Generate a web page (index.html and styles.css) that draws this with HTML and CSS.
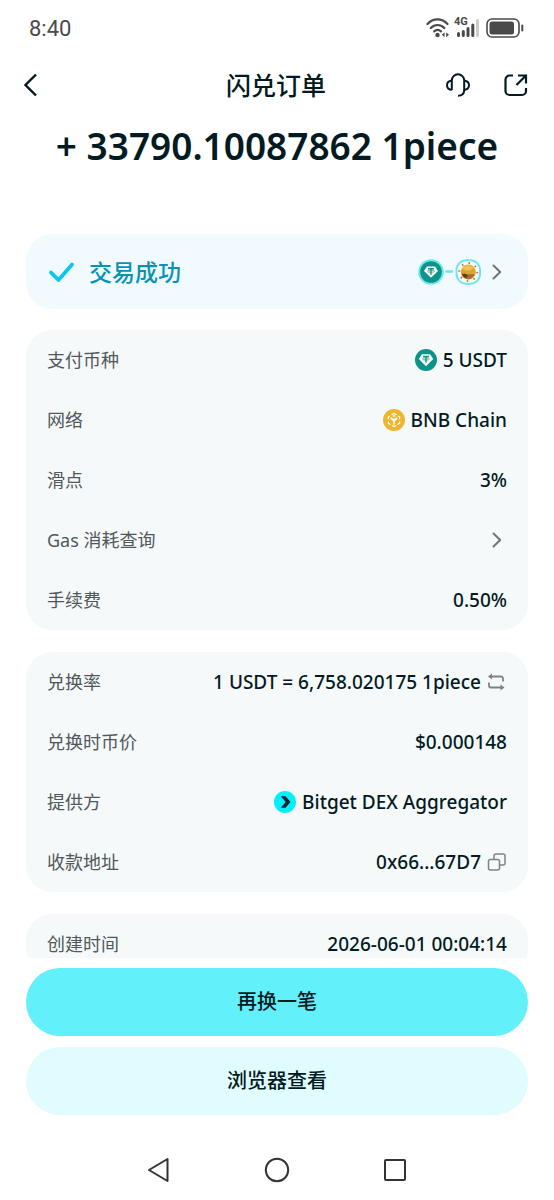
FILE: index.html
```html
<!DOCTYPE html>
<html lang="zh-CN">
<head>
<meta charset="utf-8">
<meta name="viewport" content="width=device-width, initial-scale=1">
<title>闪兑订单</title>
<link rel="stylesheet" href="styles.css">
</head>
<body>
<svg class="defs" aria-hidden="true">
  <symbol id="usdt" viewBox="0 0 22 22">
    <circle cx="11" cy="11" r="11" fill="#0c9488"/>
    <path d="M7 5.2h8l3.2 4.9L11 17.200 3.800 10.100z" fill="#fff"/>
    <path d="M8 7.500h6M11 7.500v6.200" stroke="#0c9488" stroke-width="1.400" fill="none"/>
    <ellipse cx="11" cy="10" rx="3.500" ry="1" fill="none" stroke="#0c9488" stroke-width=".7"/>
  </symbol>
  <symbol id="chevron" viewBox="0 0 10 18">
    <path d="M1.500 2.500 8.200 9l-6.700 6.500" fill="none" stroke="currentColor" stroke-width="2" stroke-linecap="round" stroke-linejoin="round"/>
  </symbol>
</svg>
<div class="screen">
  <div class="status-bar">
    <span class="clock">8:40</span>
    <div class="indicators">
      <svg width="24" height="20" viewBox="0 0 24 20" fill="none" stroke="#4a4a4a" stroke-width="2.200" stroke-linecap="round">
        <path d="M1.500 6C7-.2 16-.2 21.500 6M4.800 10c4-4 9.500-4 13.500 0M8.200 13.400c2-1.900 4.800-1.900 6.800 0"/>
        <circle cx="11.500" cy="17" r="2.200" fill="#4a4a4a" stroke="none"/>
        <path d="M18.600 14.200v5l-2.800-2.500zM20.200 14.200v5l2.800-2.500z" fill="#4a4a4a" stroke="none"/>
      </svg>
      <div class="signal">
        <span class="network-type">4G</span>
        <svg width="24" height="20" viewBox="0 0 24 20" fill="none" stroke="#4a4a4a" stroke-width="3" stroke-linecap="round">
          <path d="M2.500 15.500v2M7.300 13.500v4M12 10.500v7M16.800 7v10.500"/>
          <path d="M21.500 2.500v15" stroke="#ccc"/>
        </svg>
      </div>
      <svg width="38" height="20" viewBox="0 0 38 20">
        <rect x="1" y="1" width="32" height="18" rx="5" fill="none" stroke="#4a4a4a" stroke-width="1.600"/>
        <rect x="3.500" y="3.500" width="24.500" height="13" rx="2.500" fill="#4a4a4a"/>
        <path d="M36.300 7.500v5" stroke="#4a4a4a" stroke-width="2" stroke-linecap="round"/>
      </svg>
    </div>
  </div>

  <header class="header">
    <button class="icon-button" aria-label="返回">
      <svg width="16" height="24" viewBox="0 0 16 24" fill="none" stroke="#021b23" stroke-width="2.400"><path d="M12 1.500 1.500 12 12 22.500"/></svg>
    </button>
    <h1 class="title">闪兑订单</h1>
    <div class="header-actions">
      <button class="icon-button" aria-label="客服">
        <svg width="24" height="24" viewBox="0 0 24 24" fill="none" stroke="#021b23" stroke-width="2" stroke-linejoin="round">
          <path d="M5.800 17V7.500a6.200 6.200 0 0 1 12.400 0V17c0 3.500-2.200 5.800-6.200 5.800"/>
          <path d="M5.800 7.500C2.500 8 1 10 1 12.200s1.500 4.300 4.800 4.800M18.200 7.500c3.300.5 4.800 2.500 4.800 4.700s-1.500 4.300-4.800 4.800"/>
        </svg>
      </button>
      <button class="icon-button" aria-label="分享">
        <svg width="24" height="24" viewBox="0 0 24 24" fill="none" stroke="#021b23" stroke-width="2.200">
          <path d="M9 2.500H5.500a4 4 0 0 0-4 4v11.500a4 4 0 0 0 4 4H18a4 4 0 0 0 4-4V15"/>
          <path d="M14 2.500h8v8M22 2.500l-9.500 9.500"/>
        </svg>
      </button>
    </div>
  </header>

  <main class="content">
    <p class="amount">+ 33790.10087862 1piece</p>

    <a class="card result" href="#progress">
      <svg width="28" height="22" viewBox="0 0 28 22" fill="none" stroke="#0bc5ea" stroke-width="3.800" stroke-linecap="round" stroke-linejoin="round"><path d="m3 11.500 7.500 7.500L24 3.500"/></svg>
      <span class="result-text">交易成功</span>
      <span class="route">
        <svg width="63" height="26" viewBox="0 0 63 26">
          <circle cx="13" cy="13" r="11.800" fill="#0c9488" stroke="#6ae8ee" stroke-width="2"/>
          <path d="M9 7.500h8l3 4.600-7 6.700-7-6.700z" fill="#fff"/>
          <path d="M10 9.800h6M13 9.800v6" stroke="#0c9488" stroke-width="1.400"/>
          <ellipse cx="13" cy="12.200" rx="3.500" ry="1" fill="none" stroke="#0c9488" stroke-width=".7"/>
          <path d="M28.500 12.500h5.500" stroke="#6ae8ee" stroke-width="2.600" stroke-linecap="round"/>
          <rect x="38.500" y="1.200" width="23.600" height="23.600" rx="10" fill="#fffdf9" stroke="#6ae8ee" stroke-width="2"/>
          <circle cx="50.300" cy="13" r="9" fill="none" stroke="#b87432" stroke-width="2" stroke-dasharray="1.500 5.570"/>
          <circle cx="50.300" cy="13" r="7.500" fill="#d9a336"/>
          <path d="M44 10c3-5 9-4.500 12-1-3 1-4 3.500-7 2.500z" fill="#efc353"/>
          <path d="M43.500 14.500c2-.5 3 1.500 6 1 2-1 3 .5 7-.5-2 6.500-10 7.500-13-.5z" fill="#a86c22"/>
          <path d="m44 15.500 3-1 3 2-2 2.500c-2-.5-3.500-2-4-3.500z" fill="#5d3c18"/>
        </svg>
        <svg class="arrow" width="10" height="18"><use href="#chevron"/></svg>
      </span>
    </a>

    <dl class="card">
      <div class="row"><dt>支付币种</dt><dd><svg width="22" height="22"><use href="#usdt"/></svg>5 USDT</dd></div>
      <div class="row"><dt>网络</dt><dd>
        <svg width="22" height="22" viewBox="0 0 22 22">
          <circle cx="11" cy="11" r="11" fill="#efb62d"/>
          <path d="m8.500 5.800 2.500-1.400 2.500 1.400M15.300 7l1.300.8v2.400M16.600 12.500v1.800l-2 1.200M13 16.400l-2 1.200-2-1.200M7.400 15.500l-2-1.200v-1.800M5.400 10.200V7.800L6.700 7" fill="none" stroke="#fff" stroke-width="1.200"/>
          <path d="m7.600 8 3.400 2 3.400-2v2.300L11 12.500l-3.400-2.200zM10.200 12h1.600v3.600h-1.600z" fill="#fff"/>
          <path d="m9.300 7 1.700-1 1.700 1-1.700 1z" fill="#fff"/>
        </svg>BNB Chain</dd></div>
      <div class="row"><dt>滑点</dt><dd>3%</dd></div>
      <div class="row"><dt>Gas 消耗查询</dt><dd><a href="#gas" aria-label="Gas 消耗查询"><svg class="arrow" width="10" height="18"><use href="#chevron"/></svg></a></dd></div>
      <div class="row"><dt>手续费</dt><dd>0.50%</dd></div>
    </dl>

    <dl class="card">
      <div class="row"><dt>兑换率</dt><dd>1 USDT = 6,758.020175 1piece
        <button class="icon-button" aria-label="切换兑换率">
          <svg width="20" height="18" viewBox="0 0 20 18" fill="none" stroke="#7d8385" stroke-width="1.800">
            <path d="M16 8.500V5.500a2 2 0 0 0-2-2H3M2 9.500v3a2 2 0 0 0 2 2h11"/>
            <path d="M5 .5v6l-4-3zM13.500 11.500v6l4-3z" fill="#7d8385" stroke="none"/>
          </svg>
        </button></dd></div>
      <div class="row"><dt>兑换时币价</dt><dd>$0.000148</dd></div>
      <div class="row"><dt>提供方</dt><dd>
        <svg width="22" height="22" viewBox="0 0 22 22"><circle cx="11" cy="11" r="11" fill="#00f0ff"/><path d="M6.800 5.200h4.700l5 5.800-5 5.800H6.800l4.500-5.300c.3-.3.3-.7 0-1z" fill="#06222c"/></svg>Bitget DEX Aggregator</dd></div>
      <div class="row"><dt>收款地址</dt><dd>0x66...67D7
        <button class="icon-button" aria-label="复制地址">
          <svg width="20" height="18" viewBox="0 0 20 18" fill="none" stroke="#7d8385" stroke-width="1.500"><rect x="1.500" y="6.500" width="11" height="10.500" rx="2"/><path d="M7 6V3a2 2 0 0 1 2-2h7a2 2 0 0 1 2 2v7a2 2 0 0 1-2 2H13"/></svg>
        </button></dd></div>
    </dl>

    <dl class="card">
      <div class="row"><dt>创建时间</dt><dd>2026-06-01 00:04:14</dd></div>
    </dl>
  </main>

  <footer class="actions">
    <button class="button primary">再换一笔</button>
    <button class="button secondary">浏览器查看</button>
  </footer>

  <nav class="system-nav" aria-label="系统导航">
    <button class="icon-button" aria-label="后退"><svg width="26" height="26" viewBox="0 0 26 26"><path d="M3 13 21.500 2v22z"/></svg></button>
    <button class="icon-button" aria-label="主屏幕"><svg width="26" height="26" viewBox="0 0 26 26"><circle cx="13" cy="13" r="11.200"/></svg></button>
    <button class="icon-button" aria-label="最近任务"><svg width="26" height="26" viewBox="0 0 26 26"><rect x="3" y="3" width="20" height="20" rx="1"/></svg></button>
  </nav>
</div>
</body>
</html>
```
FILE: styles.css
```css
* { box-sizing: border-box; }

body {
  margin: 0;
  background: #fff;
  color: #021b23;
  font-family: "Noto Sans", "Noto Sans CJK SC", sans-serif;
  font-size: 18px;
}

svg { display: block; flex: none; }
.defs { position: absolute; width: 0; height: 0; }
a { color: inherit; text-decoration: none; }
button { font: inherit; color: inherit; border: 0; cursor: pointer; }
.icon-button { padding: 0; background: none; display: flex; }

.screen {
  height: 100vh;
  display: flex;
  flex-direction: column;
}

.status-bar {
  flex: none;
  height: 56px;
  padding: 0 30px 0 29px;
  display: flex;
  align-items: center;
  justify-content: space-between;
}
.clock { font-family: Roboto, sans-serif; font-size: 22px; color: #4a4a4a; }
.indicators { display: flex; align-items: center; gap: 6px; }
.signal { position: relative; }
.network-type {
  position: absolute;
  left: -2px;
  top: -2px;
  font: 700 11px/12px Roboto, sans-serif;
  color: #4a4a4a;
}

.header {
  flex: none;
  height: 60px;
  padding: 0 26px 2px 24px;
  display: grid;
  grid-template-columns: 1fr auto 1fr;
  align-items: center;
}
.title { margin: 0; font-size: 25px; font-weight: 500; line-height: 36px; }
.header-actions { display: flex; justify-content: flex-end; gap: 34px; }

.content {
  flex: 1;
  min-height: 0;
  overflow: hidden;
  padding: 2px 26px 0;
}
.amount {
  margin: 0 0 60px;
  font-size: 37px;
  font-weight: 600;
  line-height: 56px;
  text-align: center;
  white-space: nowrap;
}

.card {
  margin: 0 0 22px;
  border-radius: 26px;
  background: #f5f9fa;
}
.result {
  height: 75px;
  margin-bottom: 21px;
  padding: 0 26px 0 22px;
  display: flex;
  align-items: center;
  gap: 13px;
  background: #f1fbff;
}
.result-text { padding-bottom: 2px; font-size: 23px; font-weight: 500; color: #0893b5; }
.route { margin-left: auto; display: flex; align-items: center; gap: 11px; }
.arrow { color: #70777a; }

.row {
  height: 60px;
  padding: 0 21px;
  display: flex;
  align-items: center;
  justify-content: space-between;
}
.row dt { padding-bottom: 2px; color: #50585b; }
.row dd {
  margin: 0;
  display: flex;
  align-items: center;
  gap: 6px;
  font-size: 19px;
  font-weight: 500;
}
.row .arrow { margin-right: 5px; }

.actions {
  flex: none;
  padding: 10px 26px 0;
  display: grid;
  gap: 11px;
}
.button {
  height: 68px;
  padding: 0 24px 4px;
  border-radius: 34px;
  font-size: 20px;
  font-weight: 500;
}
.primary { background: #62f0fa; }
.secondary { background: #e0fcff; }

.system-nav {
  flex: none;
  height: 85px;
  padding: 0 146px;
  padding-top: 42px;
  display: flex;
  align-items: flex-start;
  justify-content: space-between;
}
.system-nav svg { fill: none; stroke: #333; stroke-width: 2; stroke-linejoin: round; }
```
